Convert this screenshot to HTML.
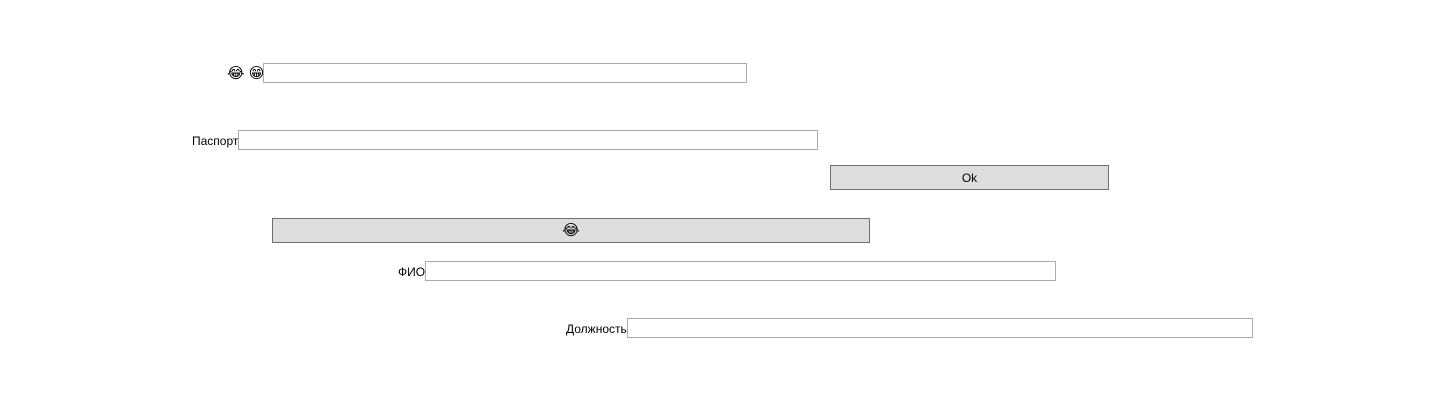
<!DOCTYPE html>
<html><head><style>
body{margin:0;width:1433px;height:418px;background:#fff;position:relative;font-family:"Liberation Sans","DejaVu Sans",sans-serif;font-size:12px;color:#000}
.i{position:absolute;box-sizing:border-box;border:1px solid #ababab;background:#fff}
.b{position:absolute;box-sizing:border-box;border:1px solid #707070;background:#dddddd;text-align:center}
.t{position:absolute;white-space:nowrap}
</style></head><body>
<div class="t" style="left:227px;top:64px;font-size:15px">😂 😁</div>
<div class="i" style="left:263px;top:63px;width:484px;height:20px"></div>
<div class="t" style="left:192px;top:134px">Паспорт</div>
<div class="i" style="left:238px;top:130px;width:580px;height:20px"></div>
<div class="b" style="left:830px;top:165px;width:279px;height:25px;line-height:25px">Ok</div>
<div class="b" style="left:272px;top:218px;width:598px;height:25px;line-height:24px;font-size:15px">😂</div>
<div class="t" style="left:398px;top:265px">ФИО</div>
<div class="i" style="left:425px;top:261px;width:631px;height:20px"></div>
<div class="t" style="left:566px;top:322px">Должность</div>
<div class="i" style="left:627px;top:318px;width:626px;height:20px"></div>
</body></html>
